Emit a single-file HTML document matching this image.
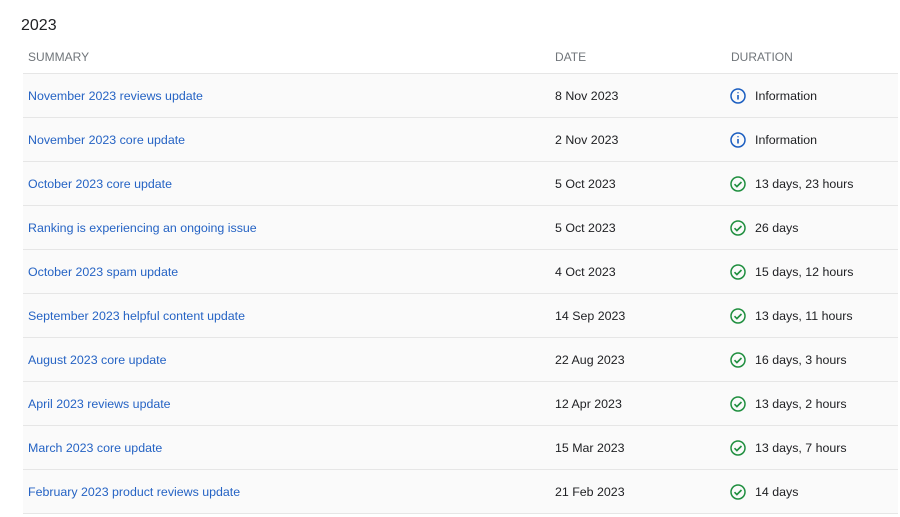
<!DOCTYPE html>
<html><head><style>
body{margin:0;background:#fff;font-family:"Liberation Sans",sans-serif;width:900px;height:517px;overflow:hidden;position:relative}
h2{position:absolute;left:21px;top:17px;margin:0;font-size:16px;font-weight:normal;color:#202124}
.t{position:absolute;left:23px;top:40px;width:875px}
.r{height:43px;border-bottom:1px solid #e6e6e6;position:relative;background:#fafafa;font-size:12.4px;color:#202124}
.h{height:33px;background:#fff;color:#70757a;font-size:12px}
.r span{position:absolute;top:50%;transform:translateY(-50%)}
.a{left:5px;color:#2563c4}
.d{left:532px}
.u{left:732px}
.i{left:706px;width:18px;height:18px}
.h span{top:10px;transform:none}
</style></head><body>
<h2>2023</h2>
<div class="t">
<div class="r h"><span class="a" style="color:#70757a">SUMMARY</span><span class="d">DATE</span><span style="left:708px">DURATION</span></div>
<div class="r"><span class="a">November 2023 reviews update</span><span class="d">8 Nov 2023</span><svg class="i" style="position:absolute;top:13px" viewBox="0 0 18 18"><circle cx="9" cy="9" r="7" fill="none" stroke="#1a5dc0" stroke-width="1.5"/><path d="M9 8v4.5M9 5.3v1" stroke="#1a5dc0" stroke-width="1.6"/></svg><span class="u">Information</span></div>
<div class="r"><span class="a">November 2023 core update</span><span class="d">2 Nov 2023</span><svg class="i" style="position:absolute;top:13px" viewBox="0 0 18 18"><circle cx="9" cy="9" r="7" fill="none" stroke="#1a5dc0" stroke-width="1.5"/><path d="M9 8v4.5M9 5.3v1" stroke="#1a5dc0" stroke-width="1.6"/></svg><span class="u">Information</span></div>
<div class="r"><span class="a">October 2023 core update</span><span class="d">5 Oct 2023</span><svg class="i" style="position:absolute;top:13px" viewBox="0 0 18 18"><circle cx="9" cy="9" r="7" fill="none" stroke="#1e8e3e" stroke-width="1.5"/><path d="M5.5 9.2l2.4 2.4 4.6-4.6" fill="none" stroke="#1e8e3e" stroke-width="1.6"/></svg><span class="u">13 days, 23 hours</span></div>
<div class="r"><span class="a">Ranking is experiencing an ongoing issue</span><span class="d">5 Oct 2023</span><svg class="i" style="position:absolute;top:13px" viewBox="0 0 18 18"><circle cx="9" cy="9" r="7" fill="none" stroke="#1e8e3e" stroke-width="1.5"/><path d="M5.5 9.2l2.4 2.4 4.6-4.6" fill="none" stroke="#1e8e3e" stroke-width="1.6"/></svg><span class="u">26 days</span></div>
<div class="r"><span class="a">October 2023 spam update</span><span class="d">4 Oct 2023</span><svg class="i" style="position:absolute;top:13px" viewBox="0 0 18 18"><circle cx="9" cy="9" r="7" fill="none" stroke="#1e8e3e" stroke-width="1.5"/><path d="M5.5 9.2l2.4 2.4 4.6-4.6" fill="none" stroke="#1e8e3e" stroke-width="1.6"/></svg><span class="u">15 days, 12 hours</span></div>
<div class="r"><span class="a">September 2023 helpful content update</span><span class="d">14 Sep 2023</span><svg class="i" style="position:absolute;top:13px" viewBox="0 0 18 18"><circle cx="9" cy="9" r="7" fill="none" stroke="#1e8e3e" stroke-width="1.5"/><path d="M5.5 9.2l2.4 2.4 4.6-4.6" fill="none" stroke="#1e8e3e" stroke-width="1.6"/></svg><span class="u">13 days, 11 hours</span></div>
<div class="r"><span class="a">August 2023 core update</span><span class="d">22 Aug 2023</span><svg class="i" style="position:absolute;top:13px" viewBox="0 0 18 18"><circle cx="9" cy="9" r="7" fill="none" stroke="#1e8e3e" stroke-width="1.5"/><path d="M5.5 9.2l2.4 2.4 4.6-4.6" fill="none" stroke="#1e8e3e" stroke-width="1.6"/></svg><span class="u">16 days, 3 hours</span></div>
<div class="r"><span class="a">April 2023 reviews update</span><span class="d">12 Apr 2023</span><svg class="i" style="position:absolute;top:13px" viewBox="0 0 18 18"><circle cx="9" cy="9" r="7" fill="none" stroke="#1e8e3e" stroke-width="1.5"/><path d="M5.5 9.2l2.4 2.4 4.6-4.6" fill="none" stroke="#1e8e3e" stroke-width="1.6"/></svg><span class="u">13 days, 2 hours</span></div>
<div class="r"><span class="a">March 2023 core update</span><span class="d">15 Mar 2023</span><svg class="i" style="position:absolute;top:13px" viewBox="0 0 18 18"><circle cx="9" cy="9" r="7" fill="none" stroke="#1e8e3e" stroke-width="1.5"/><path d="M5.5 9.2l2.4 2.4 4.6-4.6" fill="none" stroke="#1e8e3e" stroke-width="1.6"/></svg><span class="u">13 days, 7 hours</span></div>
<div class="r"><span class="a">February 2023 product reviews update</span><span class="d">21 Feb 2023</span><svg class="i" style="position:absolute;top:13px" viewBox="0 0 18 18"><circle cx="9" cy="9" r="7" fill="none" stroke="#1e8e3e" stroke-width="1.5"/><path d="M5.5 9.2l2.4 2.4 4.6-4.6" fill="none" stroke="#1e8e3e" stroke-width="1.6"/></svg><span class="u">14 days</span></div>
</div>
</body></html>
